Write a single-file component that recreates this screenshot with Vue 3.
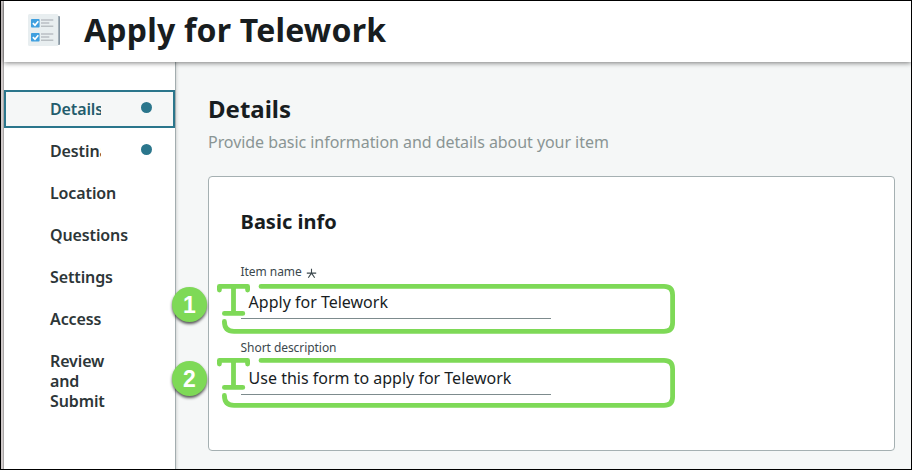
<script setup>
const steps = [
  { label: 'Details', active: true, dot: true },
  { label: 'Destination', dot: true },
  { label: 'Location' },
  { label: 'Questions' },
  { label: 'Settings' },
  { label: 'Access' },
  { label: 'Review and Submit' },
]
const fields = [
  { label: 'Item name', value: 'Apply for Telework', required: true },
  { label: 'Short description', value: 'Use this form to apply for Telework' },
]
</script>

<template>
  <div class="frame">
    <div class="edge"></div>
    <div class="app">
      <header class="header">
        <svg class="logo" width="33" height="33" viewBox="0 0 33 33">
          <rect x="3" y="2" width="29" height="29" rx="1" fill="#8796a2" />
          <rect x="0" y="0" width="30.3" height="32" rx="1.5" fill="#e8eef0" />
          <g v-for="y in [5, 19]" :key="y">
            <rect x="3" :y="y" width="8.6" height="8.6" rx="0.8" fill="#3f9fdf" />
            <path :d="`M4.9 ${y + 4.1} l2.1 2.2 l3.3 -4`" fill="none" stroke="#fff" stroke-width="1.7" />
            <path :d="`M13 ${y + 1} h12.3 M13 ${y + 4} h8.3 M13 ${y + 7.2} h12.3`" stroke="#b9bfc3" stroke-width="1.5" />
          </g>
        </svg>
        <h1 class="title">Apply for Telework</h1>
      </header>
      <div class="body">
        <nav class="nav">
          <div v-for="s in steps" :key="s.label" class="step" :class="{ active: s.active }">
            <span class="step-label" :class="{ clipped: s.dot }">{{ s.label }}</span>
            <span v-if="s.dot" class="dot"></span>
          </div>
        </nav>
        <main class="main">
          <h2 class="heading">Details</h2>
          <p class="intro">Provide basic information and details about your item</p>
          <section class="card">
            <h3 class="card-title">Basic info</h3>
            <div v-for="f in fields" :key="f.label" class="field">
              <div class="label">
                <span>{{ f.label }}</span>
                <svg v-if="f.required" class="star" width="11" height="11" viewBox="0 0 11 11">
                  <path d="M5.5 0.7V5.3M0.8 5.1H10.2M5.5 5.1L2.3 9.8M5.5 5.1L8.7 9.8" fill="none" stroke="#3c484d" stroke-width="1.1" />
                </svg>
              </div>
              <div class="value">{{ f.value }}</div>
            </div>
            <div v-for="n in 2" :key="n" class="callout" :class="'callout-' + n">
              <span class="badge">{{ n }}</span>
              <svg class="outline" width="462" height="54" viewBox="215 282 462 54">
                <path
                  d="M219.4 290V286.4H247.6V290M233.5 286.4V313.4M224.4 313.4H242.8M261 286.4H664Q672.6 286.4 672.6 295V322.7Q672.6 331.3 664 331.3H234Q224.4 331.3 224.4 321.5"
                  fill="none" stroke="#7ed957" stroke-width="4.8" stroke-linecap="round" stroke-linejoin="round"
                />
              </svg>
            </div>
          </section>
        </main>
      </div>
    </div>
  </div>
</template>

<style>
body { margin: 0; overflow: hidden; }
</style>

<style scoped>
.frame {
  box-sizing: border-box;
  width: 912px;
  height: 470px;
  display: flex;
  border: 1px solid #000;
  background: #fff;
  font-family: "Noto Sans", sans-serif;
  overflow: hidden;
}
.edge { width: 2px; background: #d0caca; border-right: 1px solid #aaa8a8; }
.app { flex: 1; display: flex; flex-direction: column; min-width: 0; }
.header {
  height: 61px;
  flex: none;
  display: flex;
  align-items: center;
  padding-left: 24px;
  background: #fff;
  box-shadow: 0 1px 5px rgba(0, 0, 0, 0.5);
  position: relative;
  z-index: 1;
}
.logo { margin-right: 23px; margin-top: -3px; }
.title { margin: -3px 0 0; font-size: 32px; line-height: 44px; font-weight: 700; letter-spacing: 0.2px; color: #181d1f; white-space: nowrap; }
.body { flex: 1; display: flex; min-height: 0; }
.nav {
  box-sizing: border-box;
  width: 172px;
  flex: none;
  padding-top: 28px;
  background: #fff;
  border-right: 1px solid #a3adaf;
  display: flex;
  flex-direction: column;
  gap: 4px;
}
.step {
  box-sizing: border-box;
  display: flex;
  align-items: flex-start;
  padding: 7px 17px 7px 44px;
  border: 2px solid transparent;
  font-size: 16px;
  line-height: 20px;
  font-weight: 600;
  letter-spacing: -0.12px;
  color: #2d3638;
}
.active { border-color: #2b768c; background: #f5f7f7; color: #235c6c; }
.step-label { width: 80px; }
.clipped { width: 51px; overflow: hidden; white-space: nowrap; }
.dot { width: 11px; height: 11px; margin: 3px 4px 0 auto; border-radius: 50%; background: #2b768c; }
.main { flex: 1; padding: 32px 16px 0 32px; background: #f5f7f7; box-shadow: inset 3px 0 3px -2px rgba(0, 0, 0, 0.14); }
.heading { margin: 0; font-size: 24px; line-height: 30px; font-weight: 700; color: #181d1f; }
.intro { margin: 7px 0 0; font-size: 16px; line-height: 22px; letter-spacing: -0.055px; color: #8a9594; }
.card {
  position: relative;
  box-sizing: border-box;
  height: 275px;
  margin-top: 23px;
  padding: 30px 32px 0 31.6px;
  background: #fff;
  border: 1px solid #a5b0b2;
  border-radius: 4px;
}
.card-title { margin: 0 0 26px; font-size: 20px; line-height: 30px; font-weight: 700; color: #181d1f; }
.field { width: 310px; height: 76px; }
.label { display: flex; align-items: center; gap: 4px; font-size: 12px; line-height: 18px; letter-spacing: -0.06px; color: #3c484d; }
.star { margin-top: 3px; }
.value { box-sizing: border-box; height: 38px; padding-left: 8px; font-size: 16px; line-height: 42px; color: #181d1f; border-bottom: 1px solid #7d8b8d; white-space: nowrap; }
.callout { position: absolute; left: -37px; width: 503px; height: 54px; }
.callout-1 { top: 105px; }
.callout-2 { top: 179px; }
.badge {
  position: absolute;
  left: 0;
  top: 5px;
  width: 35px;
  height: 35px;
  border-radius: 50%;
  background: #7ed957;
  box-shadow: 0 2px 3px rgba(0, 0, 0, 0.65);
  color: #fff;
  font: 700 23px/36px "Liberation Sans", sans-serif;
  text-align: center;
}
.outline { position: absolute; left: 43px; top: 0; }
</style>
